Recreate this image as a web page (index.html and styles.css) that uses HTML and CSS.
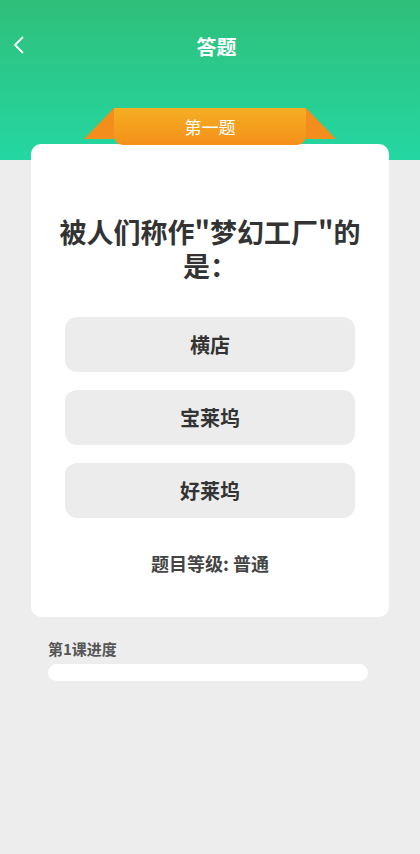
FILE: index.html
```html
<!DOCTYPE html>
<html lang="zh-CN">
<head>
  <meta charset="UTF-8" />
  <meta name="viewport" content="width=device-width, initial-scale=1" />
  <title>答题</title>
  <link rel="stylesheet" href="styles.css">
</head>
<body>

  <div class="top">
    <header class="nav">
      <span class="back">
        <svg width="14" height="20" viewBox="0 0 14 20"><path d="M11 2 L3 10 L11 18" fill="none" stroke="#fff" stroke-width="1.8"/></svg>
      </span>
      <h1>答题</h1>
    </header>
    <div class="ribbon">
      <span class="wing left"></span>
      <span class="tab">第一题</span>
      <span class="wing right"></span>
    </div>
  </div>

  <div class="card">
    <h2 class="question">被人们称作"梦幻工厂"的是：</h2>
    <div class="options">
      <div class="option">横店</div>
      <div class="option">宝莱坞</div>
      <div class="option">好莱坞</div>
    </div>
    <p class="level">题目等级: 普通</p>
  </div>

  <div class="progress">
    <p class="progress-title">第1课进度</p>
    <div class="bar"></div>
  </div>

</body>
</html>
```

FILE: styles.css
```css
body {
  font-family: "Noto Sans CJK SC", "Noto Sans", sans-serif;
  background: #ededed;
  margin: 0;
  padding: 0;
  color: #333;
}

.top {
  height: 160px;
  background: linear-gradient(180deg, #2fbf7a 0%, #24d7a2 100%);
  display: flex;
  flex-direction: column;
  align-items: center;
}

.nav {
  position: relative;
  width: 100%;
  height: 48px;
  margin-top: 22px;
  display: flex;
  align-items: center;
  justify-content: center;
}

.nav h1 {
  margin: 0 0 0 13px;
  color: #fff;
  font-size: 20px;
  font-weight: bold;
}

.back {
  position: absolute;
  left: 12px;
  top: 13px;
  display: flex;
}

.ribbon {
  position: relative;
  z-index: 2;
  margin-top: 38px;
  display: flex;
  align-items: flex-start;
}

.wing {
  width: 30px;
  height: 31px;
  background: #f38d1b;
}

.wing.left {
  clip-path: polygon(100% 0, 100% 100%, 0 100%);
}

.wing.right {
  clip-path: polygon(0 0, 100% 100%, 0 100%);
}

.tab {
  width: 192px;
  height: 37px;
  line-height: 37px;
  text-align: center;
  color: #fff;
  font-size: 17px;
  background: linear-gradient(180deg, #f5ae22 0%, #f5901b 100%);
  border-radius: 0 0 9px 9px;
}

.card {
  position: relative;
  margin: -16px 31px 0;
  background: #fff;
  border-radius: 10px;
  padding: 71px 24px 42px;
}

.question {
  margin: 0;
  font-size: 27px;
  line-height: 34px;
  font-weight: bold;
  text-align: center;
  color: #333;
}

.options {
  margin: 34px 10px 0;
  display: flex;
  flex-direction: column;
  gap: 18px;
}

.option {
  height: 55px;
  line-height: 55px;
  background: #ececec;
  border-radius: 12px;
  text-align: center;
  font-size: 20px;
  font-weight: bold;
}

.level {
  margin: 33px 0 0;
  font-size: 18px;
  line-height: 24px;
  font-weight: bold;
  text-align: center;
  color: #444;
}

.progress {
  padding: 0 52px 0 48px;
}

.progress-title {
  margin: 22px 0 5px;
  font-size: 15px;
  line-height: 20px;
  font-weight: bold;
  color: #555;
}

.bar {
  height: 17px;
  background: #fff;
  border-radius: 9px;
}
```
